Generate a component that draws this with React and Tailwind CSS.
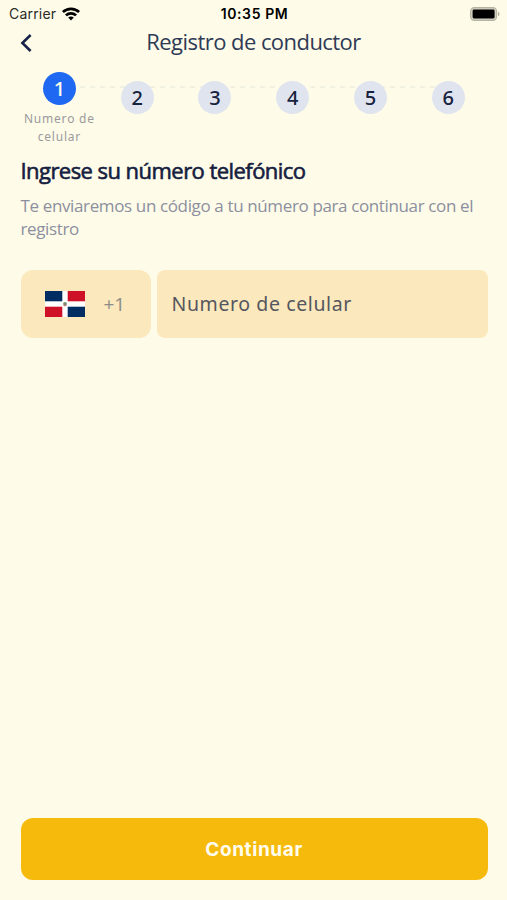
import { useState } from "react";
import clsx from "clsx";

const STEPS = [
  { id: 1, label: "Numero de celular" },
  { id: 2 },
  { id: 3 },
  { id: 4 },
  { id: 5 },
  { id: 6 },
];

const WifiIcon = () => (
  <svg width="18" height="14" viewBox="0 0 18 14" fill="none" stroke="#000" strokeWidth="2.7">
    <path d="M0.9 5C5.4 0.7 12.6 0.7 17.1 5" />
    <path d="M3.9 8.4C6.8 5.6 11.2 5.6 14.1 8.4" />
    <path d="M9 13.4L6.2 10.6C7.7 9.2 10.3 9.2 11.8 10.6Z" fill="#000" stroke="none" />
  </svg>
);

const BatteryIcon = () => (
  <svg width="30" height="14" viewBox="0 0 30 14">
    <rect x="0.6" y="0.6" width="26" height="12.8" rx="3.8" fill="#d3d1c0" stroke="#b5b3a4" strokeWidth="1.1" />
    <path d="M28 4.8C30 5.6 30 8.4 28 9.2Z" fill="#aaa898" />
    <rect x="2.6" y="2.6" width="22" height="8.8" rx="1.4" fill="#000" />
  </svg>
);

const DominicanFlag = () => (
  <svg width="40" height="26" viewBox="0 0 40 26">
    <rect width="40" height="26" fill="#fff" />
    <rect width="17.3" height="10.3" fill="#002d62" />
    <rect x="22.7" width="17.3" height="10.3" fill="#ce1126" />
    <rect y="15.7" width="17.3" height="10.3" fill="#ce1126" />
    <rect x="22.7" y="15.7" width="17.3" height="10.3" fill="#002d62" />
    <circle cx="20" cy="12.8" r="1.9" fill="#7c8b70" />
    <path d="M18.4 14.2Q20 15.6 21.6 14.2" fill="none" stroke="#c0504d" strokeWidth="0.7" />
  </svg>
);

const StatusBar = () => (
  <div className="flex h-[27px] items-center justify-between pr-[7px] pl-[9px] font-['Inter',sans-serif] text-[14px] text-black">
    <div className="flex flex-1 items-center gap-[6px]">
      <span className="tracking-[0.2px] text-[#2b2b28]">Carrier</span>
      <WifiIcon />
    </div>
    <span className="text-[14px] font-semibold tracking-[0.6px]">10:35 PM</span>
    <div className="flex flex-1 justify-end">
      <BatteryIcon />
    </div>
  </div>
);

const Stepper = ({ current }) => (
  <div className="relative mr-[20px] ml-[20.5px] h-[79px]">
    {/* Dashed track that runs behind the circles */}
    <svg className="absolute top-[20px] left-[39px]" width="390" height="2">
      <line x1="0" y1="1" x2="390" y2="1" stroke="#ecebe1" strokeWidth="1.5" strokeDasharray="5 5" />
    </svg>
    <ol className="relative grid grid-cols-6 font-['Noto_Sans',sans-serif]">
      {STEPS.map((step) => (
        <li key={step.id} className={clsx("flex flex-col items-center", step.id !== current && "pt-[9px]")}>
          <span
            className={clsx(
              "mt-[6px] flex size-[33px] items-center justify-center rounded-full text-[20px] leading-none font-medium",
              step.id === current ? "bg-[#1f69f2] text-[#fffde8]" : "bg-[#e0e4ef] text-[#17223e]"
            )}
          >
            {step.id}
          </span>
          {step.label && (
            <span className="mt-[5px] text-center text-[12px] leading-[18px] tracking-[0.8px] text-[#9a9a9c]">
              {step.label}
            </span>
          )}
        </li>
      ))}
    </ol>
  </div>
);

const App = () => {
  const [phone, setPhone] = useState("");

  return (
    <div className="flex h-screen w-full flex-col bg-[#fefce8] font-['Open_Sans',sans-serif]">
      <StatusBar />

      <header className="grid h-[39px] grid-cols-[60px_1fr_60px] px-5">
        <button type="button" aria-label="Atrás" className="flex h-[31px] items-center">
          <svg width="12" height="18" viewBox="0 0 12 18" fill="none" stroke="#17234a" strokeWidth="2.6">
            <path d="M10.6 1L2.4 9L10.6 17" />
          </svg>
        </button>
        <h1 className="text-center text-[22px] leading-[28px] tracking-[-0.55px] whitespace-nowrap text-[#2f3a56]">
          Registro de conductor
        </h1>
      </header>

      <Stepper current={1} />

      <main className="flex flex-1 flex-col pt-[10px] pr-[19.5px] pb-5 pl-[20.5px]">
        <h2 className="text-[22px] leading-[30px] tracking-[-0.55px] text-[#15203f] [-webkit-text-stroke:0.6px_#15203f]">
          Ingrese su número telefónico
        </h2>
        <p className="mt-[9px] text-[17px] leading-[23px] tracking-[-0.37px] text-[#8c8f9f]">
          Te enviaremos un código a tu número para continuar con el registro
        </p>

        <div className="mt-[30px] flex h-[68px] gap-[6px]">
          <button
            type="button"
            className="flex w-[130px] items-center gap-[19px] rounded-xl bg-[#fbe8bc] pl-6 text-[19px] text-[#8c8b88]"
          >
            <DominicanFlag />
            +1
          </button>
          <input
            type="tel"
            value={phone}
            onChange={(e) => setPhone(e.target.value)}
            placeholder="Numero de celular"
            className="min-w-0 flex-1 rounded-lg bg-[#fbe8bc] px-[15px] font-['Noto_Sans',sans-serif] text-[19.5px] tracking-[0.6px] text-[#55565f] outline-none placeholder:text-[#55565f]"
          />
        </div>

        <button
          type="button"
          className="mt-auto h-[62px] rounded-xl bg-[#f6ba0c] pt-[2px] font-['Inter',sans-serif] text-[19px] font-bold tracking-[0.6px] text-[#fffdf0]"
        >
          Continuar
        </button>
      </main>
    </div>
  );
};

export default App;
